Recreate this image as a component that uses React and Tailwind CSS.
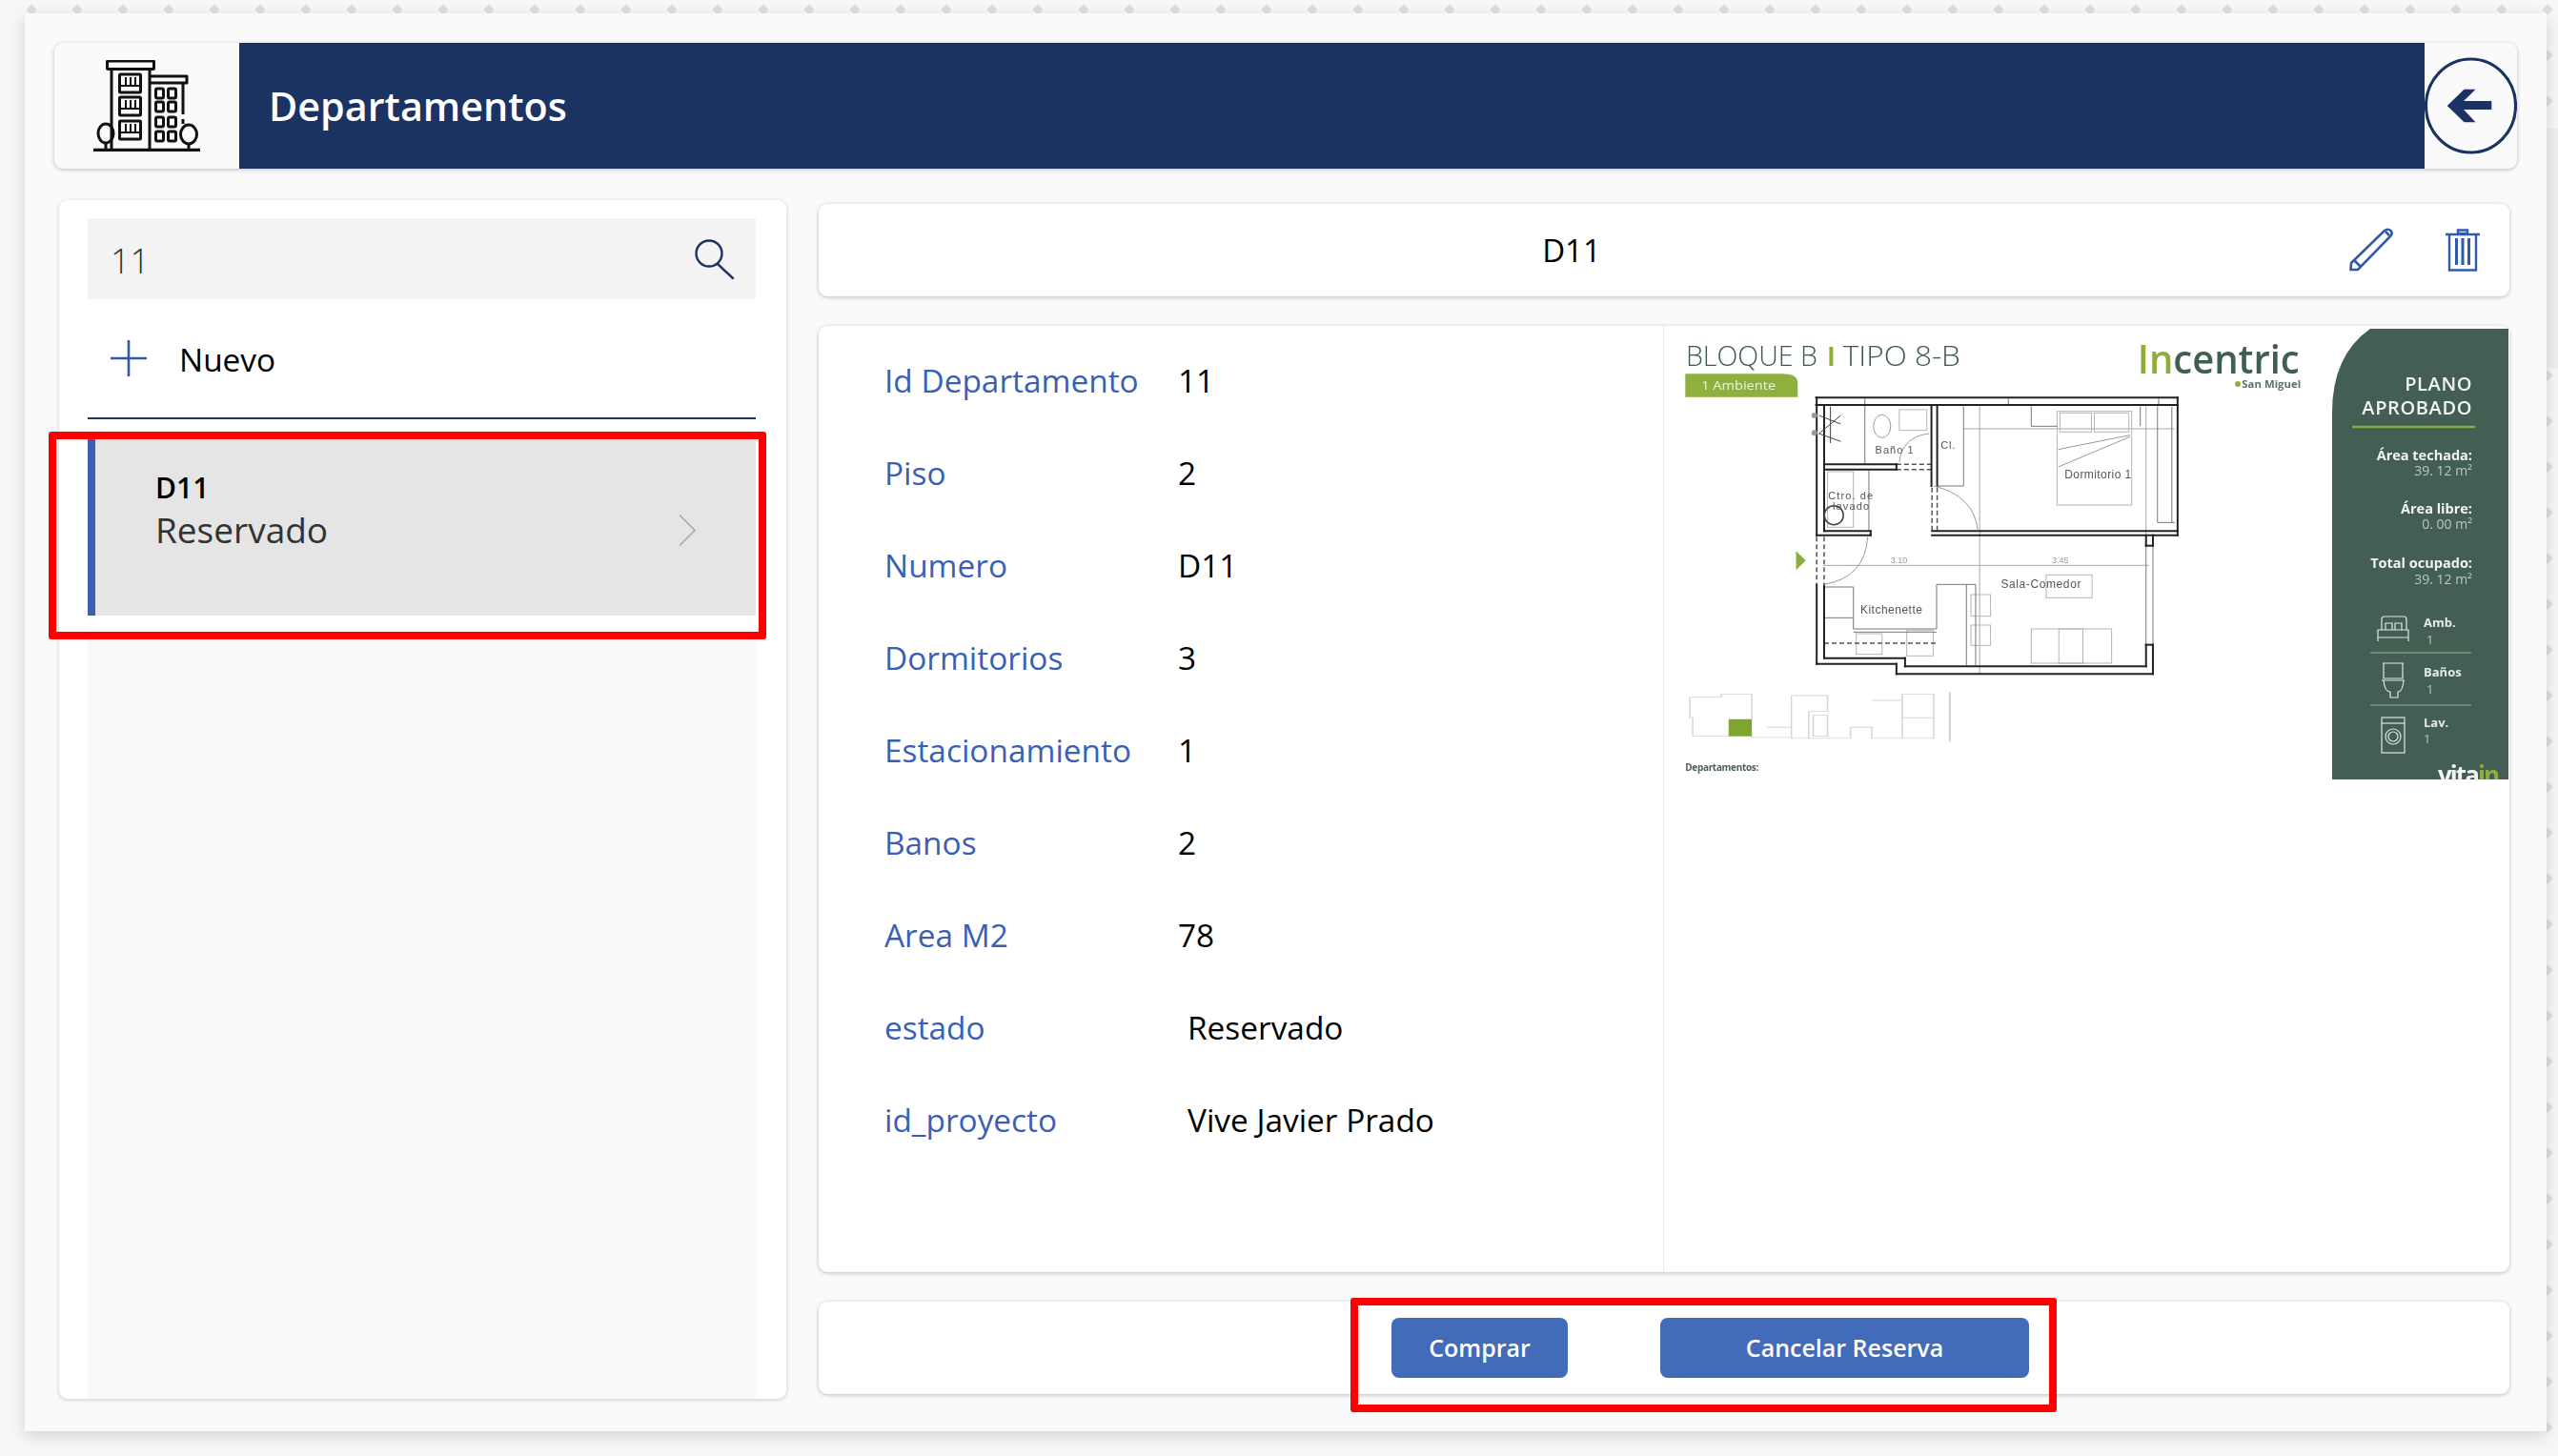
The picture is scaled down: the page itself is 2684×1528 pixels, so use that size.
const fx = (x) => x / 1.661 - 6
const fy = (y) => y / 3 - 15

const walls = [
  [275, 262, 905, 262], [275, 285, 905, 285], [276, 262, 276, 695], [289, 285, 289, 682], [289, 682, 370, 682],
  [276, 695, 370, 695], [370, 682, 370, 695], [477, 682, 905, 682], [477, 695, 905, 695], [905, 262, 905, 695],
  [476, 285, 476, 540], [486, 285, 486, 540], [289, 472, 415, 472], [289, 488, 415, 488], [415, 472, 415, 488],
  [276, 850, 276, 1100], [289, 850, 289, 1082], [276, 1100, 415, 1100], [289, 1082, 430, 1082], [430, 1082, 430, 1108],
  [415, 1100, 415, 1132], [430, 1108, 850, 1108], [415, 1132, 862, 1132], [862, 1040, 862, 1132], [850, 1040, 850, 1108],
  [850, 1040, 862, 1040], [850, 695, 850, 728], [862, 695, 862, 728], [850, 728, 862, 728],
]
const thin = [
  [360, 265, 360, 282], [610, 265, 610, 282], [872, 265, 872, 282], [360, 285, 360, 470],
  [367, 490, 367, 680], [289, 858, 340, 858], [340, 858, 340, 990],
  [340, 990, 485, 990], [485, 850, 485, 990], [485, 850, 553, 850], [553, 850, 553, 1105],
  [537, 850, 537, 1105], [850, 728, 850, 1040], [862, 728, 862, 1040], [289, 955, 340, 955],
  [532, 290, 532, 540], [488, 540, 532, 540], [870, 290, 870, 655],
  [650, 290, 650, 352], [650, 352, 695, 352], [840, 290, 840, 352], [870, 655, 900, 655],
  [895, 290, 895, 655], [340, 1000, 485, 1000],
]
const dims = [
  [288, 790, 855, 790], [560, 290, 560, 1130], [532, 360, 900, 360], [850, 290, 850, 690],
]
const dashed = [
  [289, 1035, 485, 1035], [415, 472, 478, 472], [415, 488, 478, 488], [477, 545, 477, 680], [486, 545, 486, 680],
  [276, 700, 276, 845], [289, 700, 289, 845],
]
const rects = [
  [695, 305, 130, 295], [700, 310, 55, 60], [760, 310, 60, 60], [676, 820, 80, 72],
  [650, 990, 140, 108], [698, 990, 42, 108], [545, 882, 34, 68], [545, 978, 34, 64],
  [345, 1005, 45, 65], [433, 995, 46, 80], [420, 300, 48, 65], [295, 495, 45, 175],
]
// small site plan under the flat, in the crop's own coordinates
const keyPlan = 'M55 1205 H110 V1195 H163 V1275 H123 V1328 H60 V1270 H55 Z M123 1328 H163 V1332 H232 V1300 H190 M232 1200 H295 V1250 H262 V1335 H232 Z M262 1335 H335 V1300 H372 V1335 H480 V1270 H425 V1195 H480 V1270 M372 1215 H425 V1335 M270 1262 H295 V1328 H270 Z'

function FloorPlan() {
  return (
    <svg width="886" height="473" viewBox="0 0 886 473" className="block blur-[0.4px]">
      <text x={fx(48)} y={fy(162)} fontSize="29" fontFamily="Open Sans, sans-serif" fontWeight="300" fill="#3c5a50" textLength="138" lengthAdjust="spacingAndGlyphs">BLOQUE B</text>
      <rect x={fx(298)} y={fy(102)} width="4" height="20" fill="#8cae3a" />
      <text x={fx(322)} y={fy(162)} fontSize="29" fontFamily="Open Sans, sans-serif" fontWeight="300" fill="#3c5a50" textLength="123" lengthAdjust="spacingAndGlyphs">TIPO 8-B</text>
      <path d={`M${fx(47)} ${fy(260)} V${fy(187)} H${fx(215)} Q${fx(243)} ${fy(187)} ${fx(243)} ${fy(215)} V${fy(260)} Z`} fill="#8fb03e" />
      <text x={fx(75)} y={fy(238)} fontSize="13" fontFamily="Open Sans, sans-serif" fill="#eef3dd" textLength="78" lengthAdjust="spacingAndGlyphs">1 Ambiente</text>
      <text x={fx(835)} y={fy(187)} fontSize="41" fontFamily="Open Sans, sans-serif" fontWeight="600" fill="#3f5f50" textLength="170" lengthAdjust="spacingAndGlyphs">
        <tspan fill="#8cae3a">In</tspan>centric
      </text>
      <text x={fx(1120)} y={fy(230)} fontSize="11" textAnchor="end" fontFamily="Open Sans, sans-serif" fontWeight="700" fill="#5c7166" textLength="62" lengthAdjust="spacingAndGlyphs">San Miguel</text>
      <circle cx={fx(1010)} cy={fy(219)} r="3" fill="#8cae3a" />

      {dims.map((l, i) => <line key={i} x1={fx(l[0])} y1={fy(l[1])} x2={fx(l[2])} y2={fy(l[3])} stroke="#a8a8a8" strokeWidth="1" />)}
      {rects.map((r, i) => <rect key={i} x={fx(r[0])} y={fy(r[1])} width={r[2] / 1.661} height={r[3] / 3} fill="none" stroke="#b5b5b5" strokeWidth="1" />)}
      {thin.map((l, i) => <line key={i} x1={fx(l[0])} y1={fy(l[1])} x2={fx(l[2])} y2={fy(l[3])} stroke="#777" strokeWidth="1" />)}
      {dashed.map((l, i) => <line key={i} x1={fx(l[0])} y1={fy(l[1])} x2={fx(l[2])} y2={fy(l[3])} stroke="#555" strokeWidth="1.5" strokeDasharray="5 3" />)}
      {walls.map((l, i) => <line key={i} x1={fx(l[0])} y1={fy(l[1])} x2={fx(l[2])} y2={fy(l[3])} stroke="#222" strokeWidth="2" strokeLinecap="square" />)}
      <path d={`M${fx(480)} ${fy(540)} Q${fx(550)} ${fy(570)} ${fx(557)} ${fy(680)}`} fill="none" stroke="#999" />
      <path d={`M${fx(288)} ${fy(850)} Q${fx(360)} ${fy(830)} ${fx(365)} ${fy(700)}`} fill="none" stroke="#999" />
      <path d={`M${fx(420)} ${fy(465)} Q${fx(425)} ${fy(385)} ${fx(472)} ${fy(375)}`} fill="none" stroke="#999" />
      <path d={`M${fx(697)} ${fy(425)} L${fx(822)} ${fy(380)} M${fx(697)} ${fy(480)} L${fx(822)} ${fy(385)}`} fill="none" stroke="#999" />
      <ellipse cx={fx(306)} cy={fy(632)} rx="10" ry="10" fill="none" stroke="#444" strokeWidth="1.5" />
      <ellipse cx={fx(390)} cy={fy(352)} rx="9" ry="12" fill="none" stroke="#999" />
      {/* shower head */}
      <path d={`M${fx(300)} ${fy(290)} V${fy(405)} M${fx(280)} ${fy(318)} L${fx(318)} ${fy(345)} M${fx(318)} ${fy(318)} L${fx(280)} ${fy(375)} M${fx(280)} ${fy(375)} L${fx(318)} ${fy(400)}`} fill="none" stroke="#444" />
      <circle cx={fx(272)} cy={fy(318)} r="3" fill="#999" />
      <circle cx={fx(272)} cy={fy(373)} r="3" fill="#999" />
      <path d={`M${fx(240)} ${fy(745)} L${fx(257)} ${fy(775)} L${fx(240)} ${fy(805)} Z`} fill="#8cae3a" />

      {[
        ['Baño 1', 378, 437, 11, 40], ['Cl.', 492, 422, 11, 15], ['Dormitorio 1', 708, 515, 12, 70],
        ['Ctro. de', 296, 582, 11, 47], ['lavado', 304, 615, 11, 38], ['Kitchenette', 352, 943, 12, 65],
        ['Sala-Comedor', 597, 862, 12, 84],
      ].map(([t, x, y, s, w]) => (
        <text key={t} x={fx(x)} y={fy(y)} fontSize={s} fontFamily="Liberation Sans, sans-serif" fill="#555" textLength={w}>{t}</text>
      ))}
      <text x={fx(405)} y={fy(783)} fontSize="9" fontFamily="Liberation Sans, sans-serif" fill="#999">3.10</text>
      <text x={fx(686)} y={fy(783)} fontSize="9" fontFamily="Liberation Sans, sans-serif" fill="#999">3.45</text>

      <g transform={`translate(${fx(0)} ${fy(0)}) scale(0.602 0.3333)`}>
        <path d={keyPlan} fill="none" stroke="#d3d6d3" strokeWidth="2.5" />
        <rect x="123" y="1275" width="40" height="53" fill="#7da62f" />
        <line x1="508" y1="1190" x2="508" y2="1345" stroke="#c9c9c9" strokeWidth="3" />
      </g>
      <text x={fx(47)} y={fy(1438)} fontSize="10" fontFamily="Open Sans, sans-serif" fontWeight="700" fill="#4f5f58" textLength="77">Departamentos:</text>

      <path d="M701 473 V88 Q701 28 741 0 H886 V473 Z" fill="#435e52" />
      <g fontFamily="Open Sans, sans-serif" textAnchor="end" fill="#f1f4f2">
        <text x="848" y="65" fontSize="20" fontWeight="600" letterSpacing="0.6">PLANO</text>
        <text x="848" y="90" fontSize="20" fontWeight="600" letterSpacing="0.6">APROBADO</text>
        <text x="848" y="138" fontSize="14.5" fontWeight="700">Área techada:</text>
        <text x="848" y="154" fontSize="14" fill="#b9c7c0">39. 12 m²</text>
        <text x="848" y="194" fontSize="14.5" fontWeight="700">Área libre:</text>
        <text x="848" y="210" fontSize="14" fill="#b9c7c0">0. 00 m²</text>
        <text x="848" y="251" fontSize="14.5" fontWeight="700">Total ocupado:</text>
        <text x="848" y="268" fontSize="14" fill="#b9c7c0">39. 12 m²</text>
      </g>
      <line x1="722" y1="103" x2="851" y2="103" stroke="#86a840" strokeWidth="2.5" />
      <line x1="741" y1="340" x2="847" y2="340" stroke="#9bb0a5" />
      <line x1="741" y1="395" x2="847" y2="395" stroke="#9bb0a5" />
      <g fontFamily="Open Sans, sans-serif" fontSize="13" fontWeight="700" fill="#e4eae6">
        <text x="797" y="313">Amb.</text>
        <text x="797" y="365">Baños</text>
        <text x="797" y="418">Lav.</text>
      </g>
      <g fontFamily="Open Sans, sans-serif" fontSize="13" fill="#b9c7c0">
        <text x="800" y="331">1</text>
        <text x="800" y="383">1</text>
        <text x="797" y="435">1</text>
      </g>
      <g fill="none" stroke="#dfe6e2" strokeWidth="1.2">
        <path d="M753 316 V305 Q753 302 756 302 H776 Q779 302 779 305 V316 M749 328 V316 H781 V328 M749 324 H781 M757 316 V309 H764 V316 M767 316 V309 H774 V316" />
        <path d="M754 351 H776 M755 351 V367 H775 V351 M753 369 H777 M755 369 Q756 381 762 381 V387 H770 V381 Q775 381 776 369" />
        <rect x="753" y="408" width="24" height="37" />
        <circle cx="765" cy="428" r="8" />
        <circle cx="765" cy="428" r="5" />
        <line x1="753" y1="414" x2="777" y2="414" />
      </g>
      <text x="812" y="478" fontSize="26" fontWeight="700" fontFamily="Open Sans, sans-serif" fill="#f1f4f2" textLength="65">vita<tspan fill="#8cae3a">in</tspan></text>
    </svg>
  )
}

function BuildingLogo() {
  return (
    <svg width="112" height="96" viewBox="98 63 112 96" fill="none" stroke="#111" strokeWidth="3" strokeLinejoin="round" className="block">
      <rect x="112.5" y="64" width="49" height="8.5" rx="1" />
      <path d="M117 73 V156 M157 73 V156 M158 80 H196 V87 H158 M192 87 V120 M192 125 V130" />
      {[78, 102, 127].map((y) => (
        <g key={y}>
          <rect x="125.5" y={y} width="22" height="19" rx="1" />
          <path d={`M125.5 ${y + 12} H147.5 M132 ${y + 3} V${y + 12} M137 ${y + 3} V${y + 12} M142 ${y + 3} V${y + 12}`} strokeWidth="2" />
        </g>
      ))}
      {[93, 107, 123, 138].map((y) => (
        <g key={y}>
          <rect x="163.5" y={y} width="8" height="10" rx="1.5" />
          <rect x="176.5" y={y} width="8" height="10" rx="1.5" />
        </g>
      ))}
      <ellipse cx="111" cy="140" rx="8" ry="10" />
      <path d="M111 150 V157 M198 150 V157" />
      <ellipse cx="198" cy="141" rx="8.5" ry="10" />
      <line x1="98.5" y1="157.5" x2="209.5" y2="157.5" strokeWidth="3.4" strokeLinecap="round" />
    </svg>
  )
}

function BackButton() {
  return (
    <svg width="98" height="102" viewBox="0 0 98 102" className="block">
      <ellipse cx="49" cy="51" rx="47.5" ry="49.5" fill="none" stroke="#1b3363" strokeWidth="3.2" />
      <path d="M24 51 L42 33.5 H54 L41.5 46 H71 V55 H41.5 L54 68.5 H42 Z" fill="#1b3363" />
    </svg>
  )
}

function PencilIcon() {
  return (
    <svg width="46" height="46" viewBox="0 0 46 46" fill="none" stroke="#3059ad" strokeWidth="2.6" className="block">
      <path d="M2 37 L37 3 Q40 0.5 43.5 3 Q46 6 43 9 L9 44 H1.5 Z" />
      <path d="M5 34 L12 41 M38 4 L42 8" />
    </svg>
  )
}

function TrashIcon() {
  return (
    <svg width="36" height="45" viewBox="0 0 36 45" fill="none" stroke="#3059ad" strokeWidth="2.4" className="block">
      <path d="M0 6 H36 M13 1.5 H23 V5 H13 Z" />
      <path d="M4 6 V43.5 H32 V6" />
      <path d="M11.5 10 V38 M18 10 V38 M24.5 10 V38" strokeWidth="3" />
    </svg>
  )
}

function SearchIcon() {
  return (
    <svg width="42" height="42" viewBox="0 0 42 42" fill="none" stroke="#1b3363" strokeWidth="2.4" className="block">
      <ellipse cx="15" cy="15" rx="13.5" ry="13.5" />
      <path d="M24 26 L40 41" strokeLinecap="round" />
    </svg>
  )
}

function PlusIcon() {
  return (
    <svg width="38" height="38" viewBox="0 0 38 38" stroke="#3059ad" strokeWidth="2.6" className="block">
      <path d="M0 19 H38 M19 0 V38" />
    </svg>
  )
}

function ChevronIcon() {
  return (
    <svg width="18" height="33" viewBox="0 0 18 33" fill="none" stroke="#ababab" strokeWidth="1.6" className="block">
      <path d="M1 0.5 L17 16.5 L1 32.5" />
    </svg>
  )
}

const fields = [
  ['Id Departamento', '11'],
  ['Piso', '2'],
  ['Numero', 'D11'],
  ['Dormitorios', '3'],
  ['Estacionamiento', '1'],
  ['Banos', '2'],
  ['Area M2', '78'],
  ['estado', 'Reservado', true],
  ['id_proyecto', 'Vive Javier Prado', true],
]

const topDots = Array.from({ length: 56 })
const sideDots = Array.from({ length: 24 })

export default function App() {
  return (
    <div className="relative w-[2684px] h-[1528px] overflow-hidden bg-[#f7f7f7] pl-[26px] pt-[14px] font-['Open_Sans',sans-serif] text-[#000]">
      <div className="absolute left-[29px] top-[6px] flex gap-[40px]">
        {topDots.map((_, i) => <span key={i} className="block w-[8px] h-[8px] rotate-45 bg-[#dedede]" />)}
      </div>
      <div className="absolute left-[2672px] top-[135px] w-[12px] h-[251px] bg-[#efefef]" />
      <div className="absolute left-[2669px] top-[54px] flex flex-col gap-[40px]">
        <span className="block w-[8px] h-[8px] rotate-45 bg-[#dedede]" />
        <span className="block w-[8px] h-[8px] rotate-45 bg-[#dedede]" />
      </div>
      <div className="absolute left-[2669px] top-[390px] flex flex-col gap-[40px]">
        {sideDots.map((_, i) => <span key={i} className="block w-[8px] h-[8px] rotate-45 bg-[#dedede]" />)}
      </div>

      <div className="relative w-[2646px] h-[1488px] bg-[#fafafa] shadow-[0_5px_16px_rgba(0,0,0,0.15)] pt-[31px]">
        <header className="ml-[31px] w-[2584px] h-[132px] flex bg-[#fafafa] rounded-[9px] shadow-[0_1px_4px_rgba(0,0,0,0.25)] overflow-hidden">
          <div className="w-[194px] flex items-center pl-[41px]">
            <BuildingLogo />
          </div>
          <div className="flex-1 bg-[#1b3363] flex items-center pl-[31px] pt-[2px] text-white text-[41.3px] font-semibold">
            Departamentos
          </div>
          <div className="w-[97px] flex items-center justify-center">
            <BackButton />
          </div>
        </header>

        <div className="mt-[33px] ml-[36px] flex gap-[34px]">
          <aside className="w-[763px] h-[1258px] bg-white rounded-[9px] shadow-[0_1px_4px_rgba(0,0,0,0.2)] pl-[30px] pr-[32px] pt-[19px] flex flex-col">
            <div className="h-[85px] bg-[#f3f3f3] flex items-center justify-between pl-[24px] pr-[22px]">
              <span className="pt-[5px] text-[36px] font-light text-[#333]">11</span>
              <SearchIcon />
            </div>
            <div className="h-[126px] border-b-2 border-[#1b3363] flex items-center pl-[24px] gap-[34px] text-[33.4px]">
              <PlusIcon />
              <span className="pt-[2px]">Nuevo</span>
            </div>
            <div className="mt-[13px] h-[193px] bg-[#e5e5e5] border-l-8 border-[#3a5fb5] pl-[63px] pr-[63px] flex items-center justify-between">
              <div className="-mt-[32px] flex flex-col">
                <span className="text-[30px] font-semibold leading-[44px]">D11</span>
                <span className="text-[37px] font-medium leading-[44px] text-[#333]">Reservado</span>
              </div>
              <div className="pt-[14px]">
                <ChevronIcon />
              </div>
            </div>
            <div className="mt-[16px] flex-1 bg-[#f9f9f9]" />
          </aside>

          <main className="w-[1774px] pt-[4px] flex flex-col gap-[31px]">
            <div className="relative h-[97px] bg-white rounded-[9px] shadow-[0_1px_4px_rgba(0,0,0,0.25)] flex items-center justify-center text-[33px] pr-[194px]">
              D11
              <div className="absolute right-[31px] top-[25px] flex items-center gap-[55px]">
                <PencilIcon />
                <TrashIcon />
              </div>
            </div>

            <div className="h-[993px] bg-white rounded-[9px] shadow-[0_1px_4px_rgba(0,0,0,0.25)] flex">
              <div className="w-[887px] border-r border-[#eaeaea] pt-[9px] text-[33.4px]">
                {fields.map(([label, value, far]) => (
                  <div key={label} className="h-[97px] flex items-center pl-[69px]">
                    <span className="w-[308px] text-[#3a5fb5]">{label}</span>
                    <span className={far ? 'ml-[10px]' : ''}>{value}</span>
                  </div>
                ))}
              </div>
              <div className="pt-[3px]">
                <FloorPlan />
              </div>
            </div>

            <div className="h-[97px] bg-white rounded-[9px] shadow-[0_1px_4px_rgba(0,0,0,0.25)] pl-[601px] pt-[17px] flex gap-[97px] items-start">
              <button className="w-[185px] h-[63px] pt-[1px] rounded-lg bg-[#426bb9] text-white text-[25px] font-semibold">Comprar</button>
              <button className="w-[387px] h-[63px] pt-[1px] rounded-lg bg-[#426bb9] text-white text-[25px] font-semibold">Cancelar Reserva</button>
            </div>
          </main>
        </div>
      </div>

      <div className="absolute left-[51px] top-[453px] w-[753px] h-[218px] border-8 border-[#ff0000] rounded-[3px]" />
      <div className="absolute left-[1417px] top-[1362px] w-[741px] h-[120px] border-8 border-[#ff0000] rounded-[3px]" />
    </div>
  )
}
